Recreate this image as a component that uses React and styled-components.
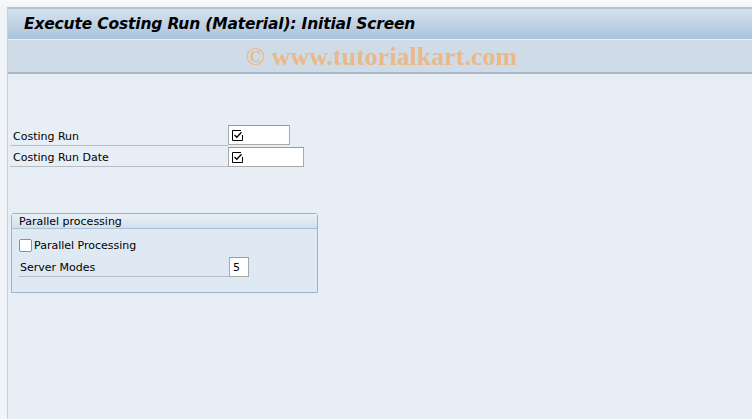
import React from "react";
import styled, { createGlobalStyle } from "styled-components";

const Global = createGlobalStyle`
  html, body { margin: 0; padding: 0; }
  body { width: 752px; height: 419px; overflow: hidden; background: #f4f6f9; font-family: Tahoma, "DejaVu Sans", sans-serif; }
`;

const Page = styled.div`
  width: 752px;
  height: 419px;
  display: flex;
  flex-direction: column;
  background: linear-gradient(#f8f9fb, #f1f4f8 8px);
`;

const TopStrip = styled.div`
  height: 7px;
  flex: none;
`;

const Frame = styled.div`
  flex: 1;
  display: flex;
  flex-direction: column;
  margin-left: 7px;
  border-left: 1px solid #c5d0dc;
  border-top: 2px solid #b4c2d0;
  background: #e8eef5;
`;

const TitleBar = styled.div`
  height: 30px;
  display: flex;
  align-items: center;
  padding-left: 16px;
  background: linear-gradient(#d6e2ee, #aac3da);
  border-bottom: 1px solid #eef3f8;
`;

const Title = styled.h1`
  margin: 0;
  font: italic bold 15.5px "DejaVu Sans", sans-serif;
  color: #000;
  letter-spacing: -0.17px;
`;

const Toolbar = styled.div`
  height: 32px;
  display: flex;
  align-items: center;
  justify-content: center;
  background: #cfdce8;
  border-bottom: 2px solid #a9b8c8;
`;

const Watermark = styled.span`
  font: bold 26px "Liberation Serif", serif;
  color: #ebb988;
  margin: 1px 0 0 3px;
`;

const Body = styled.div`
  padding: 51px 0 0 2px;
  display: flex;
  flex-direction: column;
`;

const Row = styled.div`
  display: flex;
  align-items: flex-end;
  height: 21px;
  margin-top: ${p => p.$mt || 0}px;
`;

const Label = styled.div`
  width: ${p => p.$w || 218}px;
  height: 20px;
  box-sizing: border-box;
  padding: 1px 0 0 ${p => p.$pl || 3}px;
  border-bottom: 1px solid #b6bec7;
  font: 11px "DejaVu Sans", sans-serif;
  color: #000;
  display: flex;
  align-items: center;
`;

const Input = styled.div`
  width: ${p => p.$w}px;
  height: 20px;
  box-sizing: border-box;
  background: #fff;
  border: 1px solid #a9a9a9;
  border-top-color: #9a9a9a;
  display: flex;
  align-items: center;
  padding-left: 3px;
  font: 11px "DejaVu Sans", sans-serif;
  margin-bottom: ${p => p.$mb || 0}px;
`;

const Group = styled.div`
  margin: 46px 0 0 1px;
  width: 307px;
  height: 80px;
  box-sizing: border-box;
  border: 1px solid #97b3d1;
  border-radius: 3px 3px 0 0;
  background: #dfe9f3;
  display: flex;
  flex-direction: column;
`;

const GroupHead = styled.div`
  height: 15px;
  padding: 1px 0 0 7px;
  box-sizing: border-box;
  display: flex;
  align-items: center;
  background: linear-gradient(#e9f0f7, #d2e0ee);
  border-bottom: 1px solid #a9bfd6;
  font: 11px "DejaVu Sans", sans-serif;
`;

const GroupBody = styled.div`
  padding: 10px 0 0 7px;
  display: flex;
  flex-direction: column;
`;

const CheckRow = styled.label`
  display: flex;
  align-items: center;
  gap: 2px;
  height: 13px;
  font: 11px "DejaVu Sans", sans-serif;
`;

const Box = styled.span`
  width: 11px;
  height: 11px;
  background: #fff;
  border: 1px solid #8e8f8f;
  border-radius: 2px;
`;

const CheckIcon = () => (
  <svg width="11" height="11" viewBox="0 0 11 11">
    <path d="M0.5 0.5 H9 M0.5 0.5 V10.5 H10.5 V5" fill="none" stroke="#000" strokeWidth="1" />
    <path d="M2.5 5 L4.8 7.3 L9.5 2.2" fill="none" stroke="#000" strokeWidth="1.3" />
  </svg>
);

export default function App() {
  return (
    <>
      <Global />
      <Page>
        <TopStrip />
        <Frame>
          <TitleBar>
            <Title>Execute Costing Run (Material): Initial Screen</Title>
          </TitleBar>
          <Toolbar>
            <Watermark>© www.tutorialkart.com</Watermark>
          </Toolbar>
          <Body>
            <Row>
              <Label>Costing Run</Label>
              <Input $w={62} $mb={1}><CheckIcon /></Input>
            </Row>
            <Row>
              <Label>Costing Run Date</Label>
              <Input $w={76}><CheckIcon /></Input>
            </Row>
            <Group>
              <GroupHead>Parallel processing</GroupHead>
              <GroupBody>
                <CheckRow><Box />Parallel Processing</CheckRow>
                <Row $mt={4}>
                  <Label $w={210} $pl={1}>Server Modes</Label>
                  <Input $w={20}>5</Input>
                </Row>
              </GroupBody>
            </Group>
          </Body>
        </Frame>
      </Page>
    </>
  );
}
